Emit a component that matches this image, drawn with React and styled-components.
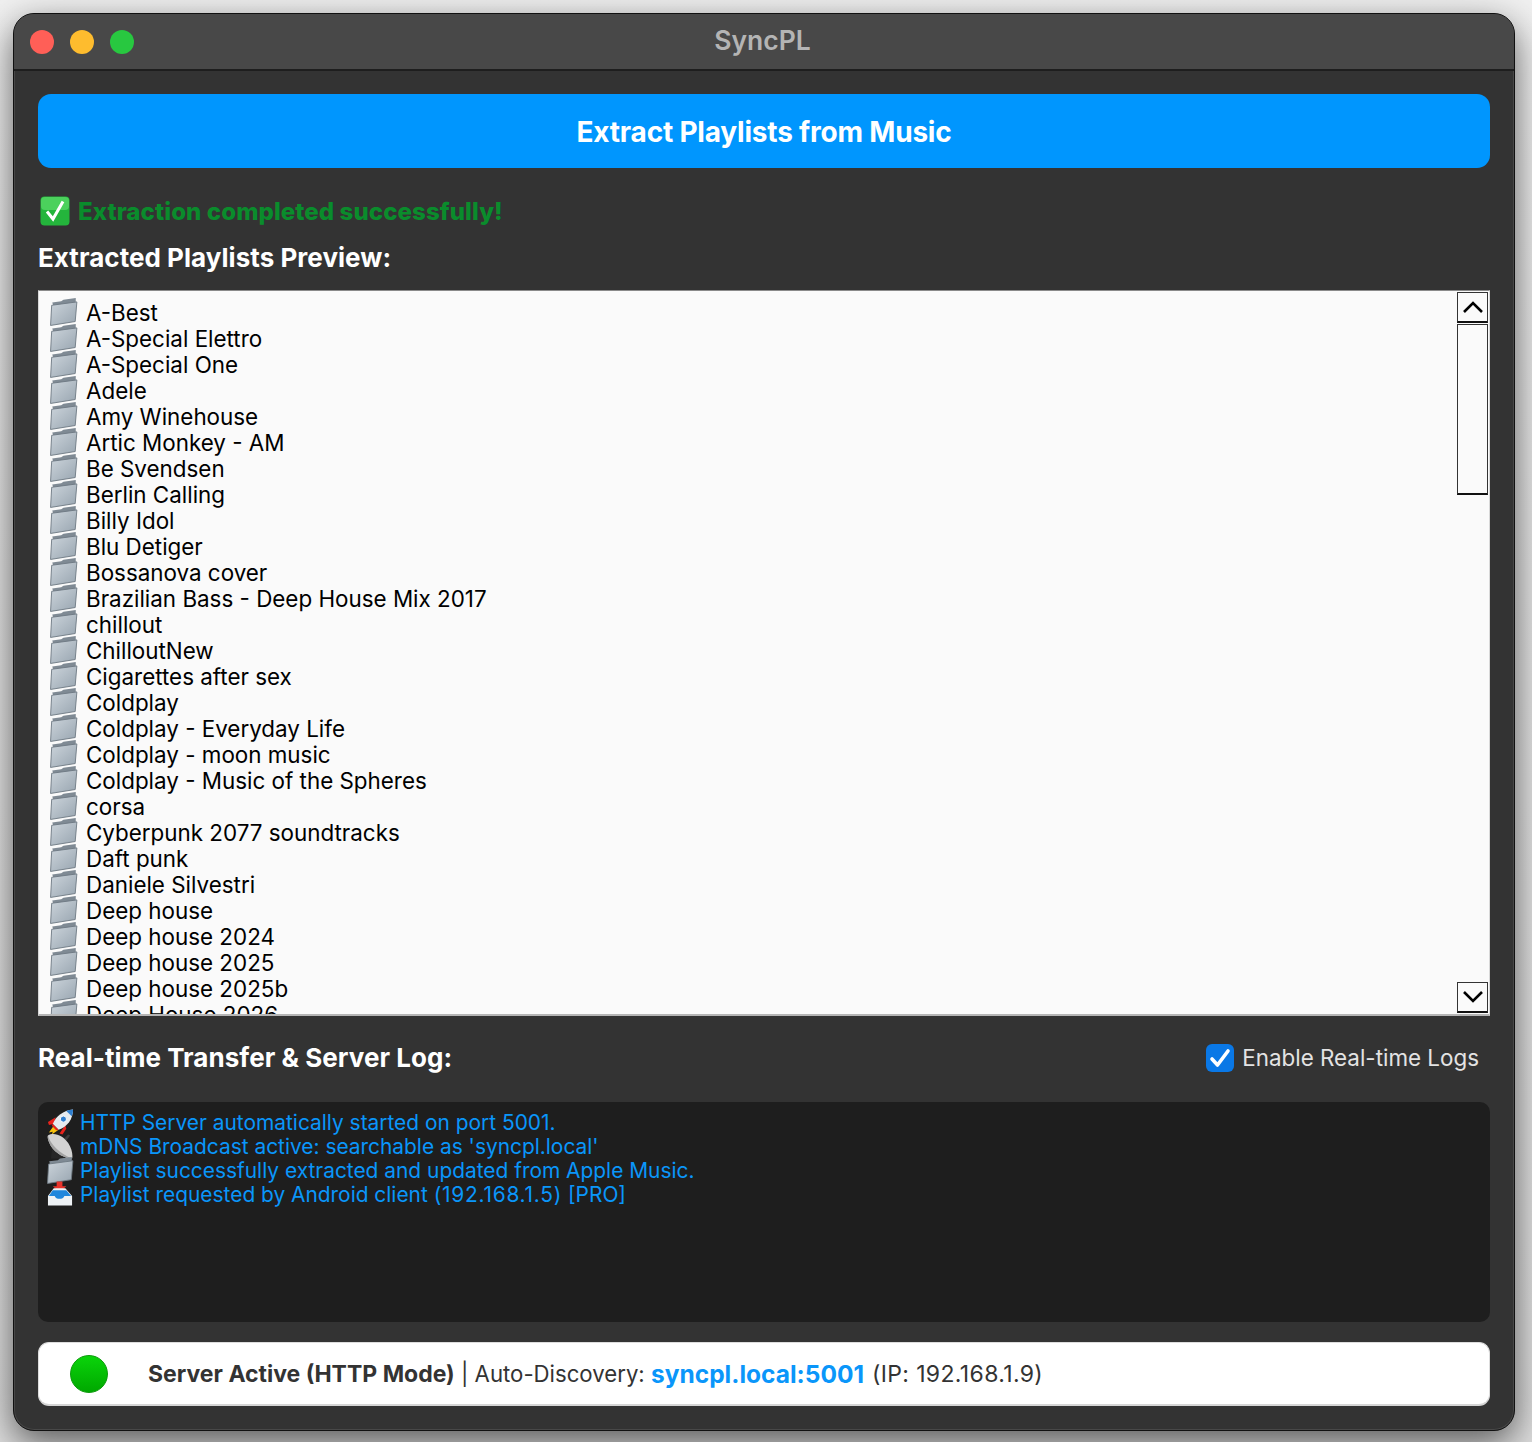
import React from "react"
import styled, { createGlobalStyle } from "styled-components"

const playlists = [
    "A-Best", "A-Special Elettro", "A-Special One", "Adele", "Amy Winehouse", "Artic Monkey - AM",
    "Be Svendsen", "Berlin Calling", "Billy Idol", "Blu Detiger", "Bossanova cover",
    "Brazilian Bass - Deep House Mix 2017", "chillout", "ChilloutNew", "Cigarettes after sex", "Coldplay",
    "Coldplay - Everyday Life", "Coldplay - moon music", "Coldplay - Music of the Spheres", "corsa",
    "Cyberpunk 2077 soundtracks", "Daft punk", "Daniele Silvestri", "Deep house", "Deep house 2024",
    "Deep house 2025", "Deep house 2025b", "Deep House 2026",
]

const GlobalStyle = createGlobalStyle`
    html, body {
        margin: 0;
        padding: 0;
    }
    body {
        background: linear-gradient(#f0f0f0, #e6e6e6 40%, #dedede);
        font-family: Inter, "Liberation Sans", sans-serif;
        -webkit-font-smoothing: antialiased;
    }
`

const Desktop = styled.div`
    width: 1532px;
    height: 1442px;
    padding: 13px 17px 11px 13px;
    box-sizing: border-box;
    overflow: hidden;
`

const Window = styled.div`
    height: 100%;
    background: #333333;
    border-radius: 21px;
    border: 1px solid #111;
    box-sizing: border-box;
    overflow: hidden;
    display: flex;
    flex-direction: column;
    box-shadow: 0 12px 36px rgba(0, 0, 0, 0.6), inset 0 0 0 1px #484848;
`

const TitleBar = styled.div`
    height: 57px;
    flex: none;
    box-sizing: border-box;
    display: flex;
    align-items: center;
    padding: 0 16px;
    background: #484848;
    border-bottom: 2px solid #1e1e1e;
    position: relative;
`

const Light = styled.span`
    width: 24px;
    height: 24px;
    border-radius: 50%;
    background: ${(p) => p.$color};
    margin-right: 16px;
`

const Title = styled.div`
    position: absolute;
    left: 0;
    right: 0;
    margin-top: -3px;
    padding-right: 3px;
    text-align: center;
    color: #b4b4b4;
    font-size: 26.5px;
    font-weight: 600;
`

const Body = styled.div`
    flex: 1;
    padding: 23px 24px 23px;
    display: flex;
    flex-direction: column;
`

const ExtractButton = styled.button`
    height: 74px;
    flex: none;
    padding: 2px 0 0;
    border: 0;
    border-radius: 13px;
    background: #0096fe;
    color: #fff;
    font-family: inherit;
    font-size: 28px;
    font-weight: 700;
    letter-spacing: -0.2px;
`

const Status = styled.div`
    display: flex;
    align-items: center;
    gap: 8px;
    margin: 28px 0 0 2px;
    color: #0a8c2c;
    font-size: 24px;
    font-weight: 800;
    letter-spacing: 0.1px;
`

const Heading = styled.div`
    color: #fff;
    font-size: 26px;
    line-height: 32px;
    font-weight: 700;
    letter-spacing: 0.04px;
`

const PreviewHeading = styled(Heading)`
    margin: 16px 0;
`

const ListBox = styled.div`
    height: 726px;
    flex: none;
    box-sizing: border-box;
    display: flex;
    background: #fafafa;
    border: 1px solid #d8d8d8;
    border-top-color: #8a8a8a;
    border-bottom: 2px solid #b5b5b5;
    overflow: hidden;
`

const Rows = styled.div`
    flex: 1;
    padding: 8px 0 0 11px;
    overflow: hidden;
`

const Row = styled.div`
    height: 26px;
    display: flex;
    align-items: center;
    gap: 8px;
    color: #000;
    font-size: 22.4px;
    white-space: nowrap;
`

const ScrollBar = styled.div`
    width: 32px;
    flex: none;
    padding: 1px 1px 1px 0;
    box-sizing: border-box;
    display: flex;
    flex-direction: column;
    align-items: stretch;
`

const ScrollButton = styled.div`
    height: 31px;
    flex: none;
    box-sizing: border-box;
    display: flex;
    align-items: center;
    justify-content: center;
    border: 1px solid #333;
    border-bottom: 2px solid #111;
`

const Track = styled.div`
    height: 171px;
    flex: none;
    box-sizing: border-box;
    margin-top: 1px;
    border: 1px solid #333;
    border-bottom: 2px solid #111;
`

const Spacer = styled.div`
    flex: 1;
`

const LogHeader = styled.div`
    display: flex;
    align-items: center;
    justify-content: space-between;
    margin-top: 26px;
    height: 32px;
    padding-right: 11px;
`

const Toggle = styled.label`
    display: flex;
    align-items: center;
    gap: 8px;
    color: #e3e3e3;
    font-size: 22.4px;
    line-height: 26px;
`

const CheckBox = styled.span`
    width: 28px;
    height: 28px;
    border-radius: 6px;
    background: #0a78e6;
    display: flex;
    align-items: center;
    justify-content: center;
`

const LogBox = styled.div`
    height: 220px;
    flex: none;
    box-sizing: border-box;
    margin-top: 28px;
    padding: 8px 9px;
    border-radius: 10px;
    background: #1e1e1e;
`

const LogLine = styled.div`
    height: 24px;
    display: flex;
    align-items: center;
    gap: 6px;
    color: #0a96fa;
    font-size: 20.9px;
    white-space: pre;
`

const LogIcon = styled.span`
    width: 27px;
    height: 24px;
    flex: none;
    display: flex;
    align-items: center;
    justify-content: center;
`

const WideNumbers = styled.span`
    letter-spacing: 0.75px;
`

const ServerBar = styled.div`
    height: 64px;
    flex: none;
    box-sizing: border-box;
    margin-top: 20px;
    padding: 0 31px;
    display: flex;
    align-items: center;
    background: #fff;
    border: 1px solid #ddd;
    border-bottom: 2px solid #d5d5d5;
    border-radius: 11px;
    color: #333;
    font-size: 22.2px;
    white-space: pre;
`

const Led = styled.span`
    width: 38px;
    height: 38px;
    margin-right: 40px;
    box-sizing: border-box;
    border-radius: 50%;
    border: 1px solid #0a9a0a;
    background: linear-gradient(#0ad40a, #00a800);
`

const Strong = styled.b`
    font-size: 23px;
    font-weight: 700;
`

const Link = styled.b`
    color: #0a96fa;
    font-size: 24.5px;
    font-weight: 700;
`

const Address = styled.span`
    margin-left: 8px;
    font-size: 23px;
    letter-spacing: 0.35px;
`

const Folder = ({ size = 28 }) => (
    <svg width={size} height={size} viewBox="2 1 25 25">
        <defs>
            <linearGradient id="fold" x1="0" y1="0" x2="1" y2="1">
                <stop offset="0" stopColor="#ccd4db" />
                <stop offset="1" stopColor="#98a5b0" />
            </linearGradient>
        </defs>
        <path d="M4 5 L12 4 L14 2.5 L25 1 L25 6 L5 8 Z" fill="#7f8a94" />
        <path d="M3.5 7.5 L26 4.5 L24.5 22 L2.5 25.5 Z" fill="url(#fold)" stroke="#6d7882" strokeWidth="0.8" />
    </svg>
)

const Rocket = () => (
    <svg width="28" height="26" viewBox="0 0 28 26">
        <path d="M7 17 L2 24 L6 23 L5 26 L12 21 Z" fill="#f7c20c" />
        <path d="M9 8 L1 13 L2 16 L7 15 Z" fill="#e8231c" />
        <path d="M19 16 L13 25 L16 26 L20 20 Z" fill="#e8231c" />
        <path d="M6 15 C9 7 17 1 27 0 C27 10 21 18 12 21 Z" fill="#e6ebef" />
        <path d="M20 1.5 C22.5 0.5 25 0.2 27 0 C27 2 26.7 4.5 25.7 7 Z" fill="#2f7fd0" />
        <circle cx="17" cy="10" r="3.2" fill="#2f7fd0" stroke="#fff" strokeWidth="1" />
        <path d="M6 15 L12 21 L9.5 21.5 L5 17 Z" fill="#e8231c" />
    </svg>
)

const Dish = () => (
    <svg width="28" height="28" viewBox="0 0 28 28">
        <path d="M6 12 L4 27 L18 27 L20 16 Z" fill="#262626" />
        <path d="M13 11 L22 2 L24 3 L16 14 Z" fill="#3c3c3c" />
        <path d="M1 3 C7 -1 17 3 22 11 C26 17 27 24 26 27 C19 27 9 22 4 14 C2 10 0 6 1 3 Z" fill="#d2d2d2" />
        <path d="M1 3 C3 11 13 22 26 27 C19 27 9 22 4 14 C2 10 0 6 1 3 Z" fill="#a2a2a2" />
    </svg>
)

const Inbox = () => (
    <svg width="28" height="26" viewBox="0 0 28 26">
        <path d="M10 0 H16 V5 H20 L13 11 L6 5 H10 Z" fill="#e8342c" />
        <path d="M7 7 H19 L26 15 V25 H1 V15 Z" fill="#eef2f5" />
        <path d="M6 9 H20 L25 15 H18 C17 19 9 19 8 15 H2 Z" fill="#1f86dc" />
    </svg>
)

const GreenCheck = () => (
    <svg width="30" height="30" viewBox="0 0 30 30">
        <rect x="0.5" y="0.5" width="29" height="29" rx="4" fill="#24b53c" />
        <rect x="1" y="1" width="28" height="13" rx="4" fill="#4bd15c" />
        <path d="M7 15.5 L13 23 L23 5.5" fill="none" stroke="#fff" strokeWidth="3" />
    </svg>
)

const Chevron = ({ up }) => (
    <svg width="22" height="14" viewBox="0 0 22 14">
        <path d={up ? "M2 12 L11 3 L20 12" : "M2 2 L11 11 L20 2"} fill="none" stroke="#000" strokeWidth="2.6" />
    </svg>
)

export default () => (
    <Desktop>
        <GlobalStyle />
        <Window>
            <TitleBar>
                <Light $color="#ff5f57" />
                <Light $color="#febc2e" />
                <Light $color="#28c840" />
                <Title>SyncPL</Title>
            </TitleBar>
            <Body>
                <ExtractButton>Extract Playlists from Music</ExtractButton>
                <Status>
                    <GreenCheck />
                    Extraction completed successfully!
                </Status>
                <PreviewHeading>Extracted Playlists Preview:</PreviewHeading>
                <ListBox>
                    <Rows>
                        {playlists.map((name) => (
                            <Row key={name}>
                                <Folder />
                                {name}
                            </Row>
                        ))}
                    </Rows>
                    <ScrollBar>
                        <ScrollButton>
                            <Chevron up />
                        </ScrollButton>
                        <Track />
                        <Spacer />
                        <ScrollButton>
                            <Chevron />
                        </ScrollButton>
                    </ScrollBar>
                </ListBox>
                <LogHeader>
                    <Heading>Real-time Transfer & Server Log:</Heading>
                    <Toggle>
                        <CheckBox>
                            <svg width="22" height="20" viewBox="0 0 22 20">
                                <path d="M3 11 L8.5 17 L19 3" fill="none" stroke="#fff" strokeWidth="3.6" strokeLinecap="round" strokeLinejoin="round" />
                            </svg>
                        </CheckBox>
                        Enable Real-time Logs
                    </Toggle>
                </LogHeader>
                <LogBox>
                    <LogLine><LogIcon><Rocket /></LogIcon>HTTP Server automatically started on port 5001.</LogLine>
                    <LogLine><LogIcon><Dish /></LogIcon>mDNS Broadcast active: searchable as 'syncpl.local'</LogLine>
                    <LogLine><LogIcon><Folder size={27} /></LogIcon>Playlist successfully extracted and updated from Apple Music.</LogLine>
                    <LogLine>
                        <LogIcon><Inbox /></LogIcon>
                        <span>Playlist requested by Android client <WideNumbers>(192.168.1.5)</WideNumbers> [PRO]</span>
                    </LogLine>
                </LogBox>
                <ServerBar>
                    <Led />
                    <Strong>Server Active (HTTP Mode)</Strong> | Auto-Discovery: <Link>syncpl.local:5001</Link>
                    <Address>(IP: 192.168.1.9)</Address>
                </ServerBar>
            </Body>
        </Window>
    </Desktop>
)
